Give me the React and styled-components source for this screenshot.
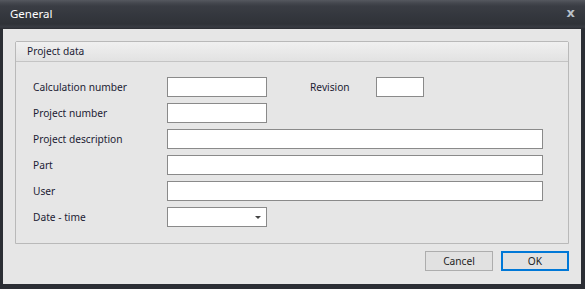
import styled, { createGlobalStyle } from "styled-components";

const GlobalStyle = createGlobalStyle`
  html, body {
    margin: 0;
    padding: 0;
    background: #2b2e34;
  }
  * {
    box-sizing: border-box;
  }
`;

const fields = [
  { label: "Project description", wide: true },
  { label: "Part", wide: true },
  { label: "User", wide: true },
];

const App = () => {
  return (
    <Window>
      <GlobalStyle />
      <TitleBar>
        <Title>General</Title>
        <Close>x</Close>
      </TitleBar>
      <Content>
        <Group>
          <GroupHeader>Project data</GroupHeader>
          <GroupBody>
            <Row>
              <Label>Calculation number</Label>
              <Field />
              <SideLabel>Revision</SideLabel>
              <Field $width={48} />
            </Row>
            <Row>
              <Label>Project number</Label>
              <Field />
            </Row>
            {fields.map((f) => (
              <Row key={f.label}>
                <Label>{f.label}</Label>
                <Field $width={376} />
              </Row>
            ))}
            <Row>
              <Label>Date - time</Label>
              <Combo>
                <Arrow />
              </Combo>
            </Row>
          </GroupBody>
        </Group>
        <Buttons>
          <Button>Cancel</Button>
          <Button $primary>OK</Button>
        </Buttons>
      </Content>
    </Window>
  );
};

const Window = styled.div`
  width: 585px;
  height: 289px;
  display: flex;
  flex-direction: column;
  padding: 0 4px 5px 3px;
  background: #2b2e34;
  font-family: "Noto Sans", "Open Sans", sans-serif;
  font-size: 10.2px;
  overflow: hidden;
`;

const TitleBar = styled.div`
  height: 29px;
  margin: 0 -4px 0 -3px;
  padding: 0 10px 0 10px;
  display: flex;
  align-items: center;
  justify-content: space-between;
  background: linear-gradient(#55585f 0, #45484f 3px, #3a3d44 6px, #2f3238 24px, #383b42 27px, #2a2c31 29px);
`;

const Title = styled.div`
  color: #ffffff;
  font-size: 11.5px;
  padding-bottom: 2px;
`;

const Close = styled.div`
  color: #b9c0c9;
  font-family: "DejaVu Sans", sans-serif;
  font-weight: bold;
  font-size: 13px;
  line-height: 1;
  padding-bottom: 5px;
`;

const Content = styled.div`
  flex: 1;
  background: #e6e6e6;
  padding: 12px 12px 13px 12px;
  display: flex;
  flex-direction: column;
`;

const Group = styled.div`
  height: 203px;
  border: 1px solid #b9b9b9;
  border-radius: 2px 2px 0 0;
  display: flex;
  flex-direction: column;
`;

const GroupHeader = styled.div`
  height: 20px;
  padding: 0 0 1px 11px;
  display: flex;
  align-items: center;
  color: #1c1c34;
  background: linear-gradient(#f0f0f0, #e2e2e2);
  border-bottom: 1px solid #c4c4c4;
`;

const GroupBody = styled.div`
  padding: 15px 24px 0 17px;
  display: flex;
  flex-direction: column;
  gap: 6px;
`;

const Row = styled.div`
  height: 20px;
  display: flex;
  align-items: center;
`;

const Label = styled.div`
  width: 134px;
  color: #1c1c34;
  white-space: nowrap;
`;

const SideLabel = styled(Label)`
  width: auto;
  margin: 0 0 0 43px;
  flex: 0 0 66px;
`;

const Field = styled.div`
  width: ${(p) => p.$width || 100}px;
  height: 20px;
  background: #ffffff;
  border: 1px solid #8a8a8a;
`;

const Combo = styled(Field)`
  display: flex;
  align-items: center;
  justify-content: flex-end;
  padding-right: 5px;
`;

const Arrow = styled.span`
  width: 0;
  height: 0;
  border-left: 3px solid transparent;
  border-right: 3px solid transparent;
  border-top: 3px solid #444444;
`;

const Buttons = styled.div`
  margin-top: 7px;
  display: flex;
  justify-content: flex-end;
  gap: 8px;
`;

const Button = styled.button`
  width: 68px;
  height: 20px;
  padding: 0;
  font-family: inherit;
  font-size: 10.2px;
  color: #1e1e1e;
  background: #e1e1e1;
  border: ${(p) => (p.$primary ? "2px solid #0078d7" : "1px solid #adadad")};
`;

export default App;
